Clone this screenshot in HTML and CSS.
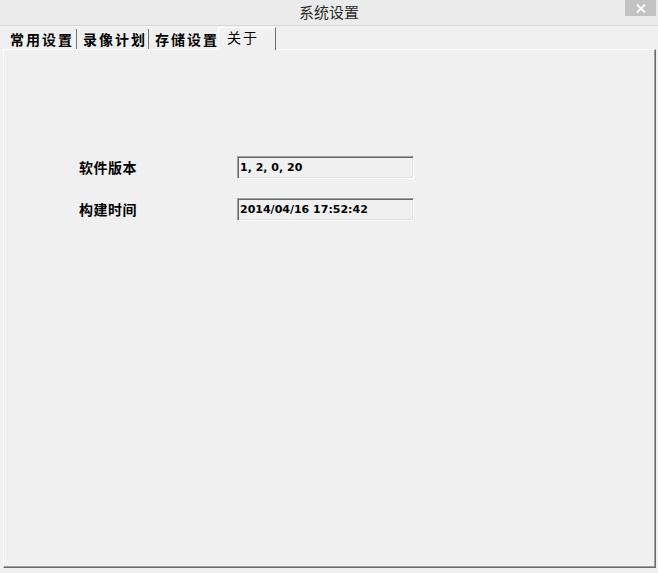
FILE: index.html
```html
<!DOCTYPE html>
<html lang="zh-CN">
<head>
<meta charset="utf-8">
<title>系统设置</title>
<link rel="stylesheet" href="styles.css">
</head>
<body>
<div class="window">
  <div class="titlebar">
    <span class="title-spacer"></span>
    <span class="title">系统设置</span>
    <span class="close" aria-label="关闭">
      <svg width="10" height="9" viewBox="0 0 10 9"><path d="M1 0.5 L9 8.5 M9 0.5 L1 8.5" stroke="#fff" stroke-width="1.8" fill="none"/></svg>
    </span>
  </div>
  <div class="client">
    <div class="tabs">
      <div class="tab tab-1">常用设置</div>
      <div class="tab tab-2">录像计划</div>
      <div class="tab tab-3">存储设置</div>
      <div class="tab tab-active">关于</div>
    </div>
    <div class="panel">
      <div class="info-grid">
        <div class="label">软件版本</div>
        <div class="field">1, 2, 0, 20</div>
        <div class="label">构建时间</div>
        <div class="field">2014/04/16 17:52:42</div>
      </div>
    </div>
  </div>
</div>
</body>
</html>
```
FILE: styles.css
```css
html, body {
  margin: 0;
  padding: 0;
}
body {
  width: 658px;
  height: 573px;
  overflow: hidden;
  background: #f0f0f0;
  font-family: "Noto Sans CJK SC", "Noto Sans", sans-serif;
}
.window {
  display: flex;
  flex-direction: column;
  width: 658px;
  height: 573px;
}
.titlebar {
  height: 25px;
  background: #ebebeb;
  border-bottom: 1px solid #d9d9d9;
  display: grid;
  grid-template-columns: 1fr auto 1fr;
  flex: none;
}
.title {
  font-size: 15px;
  line-height: 23px;
  color: #2b2b2b;
  letter-spacing: 0;
}
.close {
  justify-self: end;
  align-self: start;
  width: 31px;
  height: 16px;
  margin-right: 2px;
  background: #c2c2c2;
  display: flex;
  align-items: center;
  justify-content: center;
}
.client {
  flex: 1;
  display: flex;
  flex-direction: column;
  padding: 0 2px 5px 3px;
  border-left: 1px solid #e2e2e2;
  margin-left: -1px;
}
.tabs {
  height: 23px;
  display: flex;
  align-items: flex-end;
  flex: none;
}
.tab {
  height: 20px;
  line-height: 20px;
  font-size: 14px;
  font-weight: 700;
  letter-spacing: 2px;
  color: #000;
  white-space: nowrap;
}
.tab-1 {
  padding: 0 2px 0 7px;
  border-right: 1px solid #767676;
  margin-right: 1px;
}
.tab-2 {
  padding: 0 1px 0 5px;
  border-right: 1px solid #767676;
  margin-right: 1px;
}
.tab-3 {
  padding: 0 0 0 5px;
}
.tab-active {
  position: relative;
  z-index: 1;
  margin-left: -1px;
  margin-bottom: -1px;
  height: 23px;
  box-sizing: border-box;
  padding: 0 16px 0 8px;
  background: #f0f0f0;
  border-top: 1px solid #ffffff;
  border-left: 1px solid #ffffff;
  border-right: 1px solid #6e6e6e;
  font-weight: 400;
  line-height: 19px;
}
.panel {
  flex: 1;
  background: #f0f0f0;
  border-top: 1px solid #ffffff;
  border-left: 1px solid #ffffff;
  border-right: 1px solid #696969;
  border-bottom: 1px solid #696969;
  box-shadow: inset -1px -1px 0 #a0a0a0;
  padding: 106px 0 0 75px;
}
.info-grid {
  display: grid;
  grid-template-columns: 158px 177px;
  grid-auto-rows: 23px;
  row-gap: 19px;
  align-items: center;
}
.label {
  font-size: 14px;
  font-weight: 700;
  letter-spacing: 0.5px;
  color: #000;
  line-height: 23px;
}
.field {
  box-sizing: border-box;
  height: 23px;
  border: 1px solid;
  border-color: #a0a0a0 #ffffff #ffffff #a0a0a0;
  box-shadow: inset 1px 1px 0 #696969, inset -1px -1px 0 #e3e3e3;
  background: #f0f0f0;
  padding: 0 0 0 2px;
  font-family: "DejaVu Sans", sans-serif;
  font-weight: 700;
  font-size: 11px;
  line-height: 21px;
  color: #000;
  white-space: nowrap;
}
```
